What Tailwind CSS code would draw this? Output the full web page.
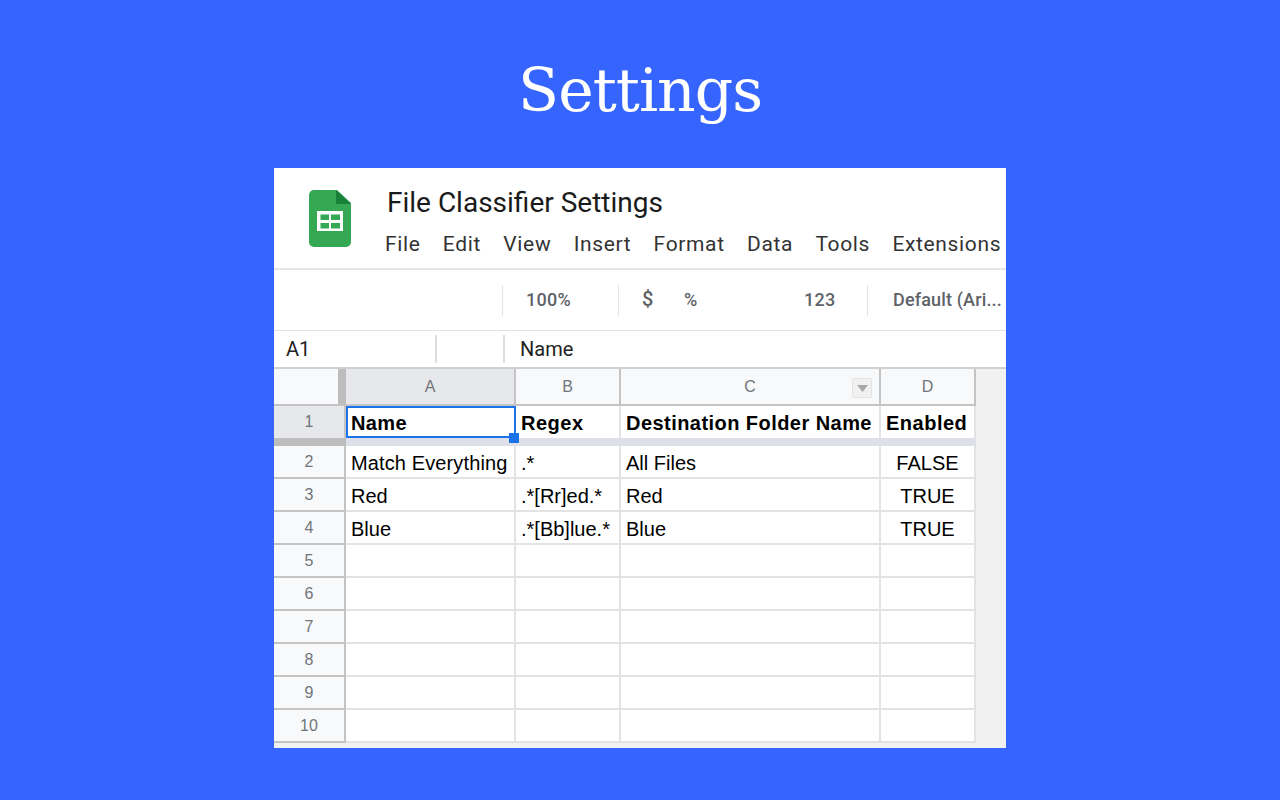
<!DOCTYPE html>
<html lang="en">
<head>
  <meta charset="utf-8" />
  <title>Settings</title>
  <script src="https://cdn.jsdelivr.net/npm/@tailwindcss/browser@4"></script>
</head>
<body class="h-[800px] overflow-hidden bg-[#3664ff] font-['Roboto',sans-serif]">
  <h1 class="h-[168px] pt-[46px] text-center font-['DejaVu_Serif',serif] text-[60px] leading-[88px] tracking-[-1px] text-white">Settings</h1>

  <div class="ml-[274px] flex h-[580px] w-[732px] flex-col overflow-hidden bg-white">
    <!-- Title and menu -->
    <div class="flex h-[102px] shrink-0 border-b-2 border-[#e6e6e6]">
      <svg class="ml-[35px] mt-[22px] h-[57px] w-[42px] shrink-0" viewBox="0 0 42 57">
        <path d="M5 0H28L42 13V52a5 5 0 0 1-5 5H5a5 5 0 0 1-5-5V5a5 5 0 0 1 5-5z" fill="#34a853"/>
        <path d="M27 0L42 14H27z" fill="#188038"/>
        <path d="M8 21H34V41H8z" fill="#fff"/>
        <path d="M11.500 24.500H20V30H11.500zM22 24.500H31V30H22zM11.500 33H20V38.500H11.500zM22 33H31V38.500H22z" fill="#34a853"/>
      </svg>
      <div class="ml-[33px] min-w-0">
        <div class="mt-[17px] h-[36px] whitespace-nowrap pl-[3px] text-[28px] leading-[36px] text-[#1a1a1a]">File Classifier Settings</div>
        <div class="ml-[1px] mt-[10px] flex gap-[22.300px] whitespace-nowrap text-[21px] leading-[26px] tracking-[0.65px] text-[#333]">
          <span>File</span><span>Edit</span><span>View</span><span>Insert</span><span>Format</span><span>Data</span><span>Tools</span><span>Extensions</span>
        </div>
      </div>
    </div>

    <!-- Toolbar -->
    <div class="flex h-[61px] shrink-0 items-center whitespace-nowrap border-b border-[#e3e3e3] text-[18px] font-medium tracking-[0.3px] text-[#5f6368]">
      <div class="ml-[228px] h-[31px] w-[1px] bg-[#e3e3e3]"></div>
      <span class="mb-[2px] ml-[23px] w-[92px]">100%</span>
      <div class="h-[31px] w-[1px] bg-[#e3e3e3]"></div>
      <span class="mb-[2px] ml-[23px] w-[42px] text-[20px]">$</span>
      <span class="mb-[2px] w-[120px]">%</span>
      <span class="mb-[2px] w-[63px]">123</span>
      <div class="h-[31px] w-[1px] bg-[#e3e3e3]"></div>
      <span class="mb-[2px] ml-[25px] tracking-[0.15px]">Default (Ari...</span>
    </div>

    <!-- Formula bar -->
    <div class="flex h-[38px] shrink-0 items-center border-b-2 border-[#d0d0d0] text-[20px] text-[#222]">
      <span class="ml-[12px] w-[149px]">A1</span>
      <div class="h-[28px] w-[2px] bg-[#dcdcdc]"></div>
      <div class="ml-[66px] h-[28px] w-[2px] bg-[#dcdcdc]"></div>
      <span class="ml-[15px]">Name</span>
    </div>

    <!-- Sheet -->
    <div class="flex-1 bg-[#f1f1f1]">
      <div class="grid w-[702px] grid-cols-[72px_170px_105px_260px_95px] grid-rows-[37px_32px_8px_33px_33px_33px_33px_33px_33px_33px_33px_33px] font-['Liberation_Sans',sans-serif] text-[20px] text-black">
        <!-- Column headers -->
        <div class="border-r-[8px] border-b-2 border-r-[#bdbdbd] border-b-[#c4c4c4] bg-[#f8f9fa]"></div>
        <div class="flex items-center justify-center border-r-2 border-b-2 border-[#c4c4c4] bg-[#e7e8ec] pt-[1px] text-[16px] text-[#70757a]">A</div>
        <div class="flex items-center justify-center border-r-2 border-b-2 border-[#c4c4c4] bg-[#f8f9fa] pt-[1px] text-[16px] text-[#70757a]">B</div>
        <div class="relative flex items-center justify-center border-r-2 border-b-2 border-[#c4c4c4] bg-[#f8f9fa] pt-[1px] text-[16px] text-[#70757a]">C
          <div class="absolute right-[7px] top-[9px] flex h-[20px] w-[20px] items-center justify-center rounded-[2px] border border-[#e3e3e3] bg-[#f1f1f1]">
            <svg class="h-[7px] w-[11px]" viewBox="0 0 11 7"><path d="M0 0H11L5.500 7z" fill="#a8a8a8"/></svg>
          </div>
        </div>
        <div class="flex items-center justify-center border-r-2 border-b-2 border-[#c4c4c4] bg-[#f8f9fa] pt-[1px] text-[16px] text-[#70757a]">D</div>

        <!-- Row 1 -->
        <div class="flex items-center justify-center border-r-2 border-[#c4c4c4] bg-[#e7e8ec] text-[16px] text-[#70757a]">1</div>
        <div class="relative flex items-center border-2 border-[#1a73e8] bg-white pl-[3px] pt-[2px] font-bold tracking-[0.4px]">Name
          <div class="absolute -bottom-[7px] -right-[5px] h-[10px] w-[10px] bg-[#1a73e8]"></div>
        </div>
        <div class="flex items-center border-r-2 border-[#e3e3e3] bg-white pl-[5px] pt-[2px] font-bold tracking-[0.5px]">Regex</div>
        <div class="flex items-center border-r-2 border-[#e3e3e3] bg-white pl-[5px] pt-[2px] font-bold tracking-[0.45px]">Destination Folder Name</div>
        <div class="flex items-center border-r-2 border-[#e3e3e3] bg-white pl-[5px] pt-[2px] font-bold tracking-[0.5px]">Enabled</div>

        <!-- Frozen row bar -->
        <div class="bg-[#bdbdbd]"></div>
        <div class="col-span-4 bg-[#dde0e9]"></div>

        <!-- Data rows -->
        <div class="flex items-center justify-center border-r-2 border-b-2 border-[#c4c4c4] bg-[#f8f9fa] text-[16px] text-[#70757a]">2</div>
        <div class="flex items-center border-r-2 border-b-2 border-[#e3e3e3] bg-white pl-[5px] pt-[2px] tracking-[0.12px]">Match Everything</div>
        <div class="flex items-center border-r-2 border-b-2 border-[#e3e3e3] bg-white pl-[5px] pt-[2px]">.*</div>
        <div class="flex items-center border-r-2 border-b-2 border-[#e3e3e3] bg-white pl-[5px] pt-[2px]">All Files</div>
        <div class="flex items-center justify-center border-r-2 border-b-2 border-[#e3e3e3] bg-white pt-[2px]">FALSE</div>

        <div class="flex items-center justify-center border-r-2 border-b-2 border-[#c4c4c4] bg-[#f8f9fa] text-[16px] text-[#70757a]">3</div>
        <div class="flex items-center border-r-2 border-b-2 border-[#e3e3e3] bg-white pl-[5px] pt-[2px]">Red</div>
        <div class="flex items-center border-r-2 border-b-2 border-[#e3e3e3] bg-white pl-[5px] pt-[2px]">.*[Rr]ed.*</div>
        <div class="flex items-center border-r-2 border-b-2 border-[#e3e3e3] bg-white pl-[5px] pt-[2px]">Red</div>
        <div class="flex items-center justify-center border-r-2 border-b-2 border-[#e3e3e3] bg-white pt-[2px]">TRUE</div>

        <div class="flex items-center justify-center border-r-2 border-b-2 border-[#c4c4c4] bg-[#f8f9fa] text-[16px] text-[#70757a]">4</div>
        <div class="flex items-center border-r-2 border-b-2 border-[#e3e3e3] bg-white pl-[5px] pt-[2px]">Blue</div>
        <div class="flex items-center border-r-2 border-b-2 border-[#e3e3e3] bg-white pl-[5px] pt-[2px]">.*[Bb]lue.*</div>
        <div class="flex items-center border-r-2 border-b-2 border-[#e3e3e3] bg-white pl-[5px] pt-[2px]">Blue</div>
        <div class="flex items-center justify-center border-r-2 border-b-2 border-[#e3e3e3] bg-white pt-[2px]">TRUE</div>

        <div class="flex items-center justify-center border-r-2 border-b-2 border-[#c4c4c4] bg-[#f8f9fa] text-[16px] text-[#70757a]">5</div>
        <div class="border-r-2 border-b-2 border-[#e3e3e3] bg-white"></div>
        <div class="border-r-2 border-b-2 border-[#e3e3e3] bg-white"></div>
        <div class="border-r-2 border-b-2 border-[#e3e3e3] bg-white"></div>
        <div class="border-r-2 border-b-2 border-[#e3e3e3] bg-white"></div>

        <div class="flex items-center justify-center border-r-2 border-b-2 border-[#c4c4c4] bg-[#f8f9fa] text-[16px] text-[#70757a]">6</div>
        <div class="border-r-2 border-b-2 border-[#e3e3e3] bg-white"></div>
        <div class="border-r-2 border-b-2 border-[#e3e3e3] bg-white"></div>
        <div class="border-r-2 border-b-2 border-[#e3e3e3] bg-white"></div>
        <div class="border-r-2 border-b-2 border-[#e3e3e3] bg-white"></div>

        <div class="flex items-center justify-center border-r-2 border-b-2 border-[#c4c4c4] bg-[#f8f9fa] text-[16px] text-[#70757a]">7</div>
        <div class="border-r-2 border-b-2 border-[#e3e3e3] bg-white"></div>
        <div class="border-r-2 border-b-2 border-[#e3e3e3] bg-white"></div>
        <div class="border-r-2 border-b-2 border-[#e3e3e3] bg-white"></div>
        <div class="border-r-2 border-b-2 border-[#e3e3e3] bg-white"></div>

        <div class="flex items-center justify-center border-r-2 border-b-2 border-[#c4c4c4] bg-[#f8f9fa] text-[16px] text-[#70757a]">8</div>
        <div class="border-r-2 border-b-2 border-[#e3e3e3] bg-white"></div>
        <div class="border-r-2 border-b-2 border-[#e3e3e3] bg-white"></div>
        <div class="border-r-2 border-b-2 border-[#e3e3e3] bg-white"></div>
        <div class="border-r-2 border-b-2 border-[#e3e3e3] bg-white"></div>

        <div class="flex items-center justify-center border-r-2 border-b-2 border-[#c4c4c4] bg-[#f8f9fa] text-[16px] text-[#70757a]">9</div>
        <div class="border-r-2 border-b-2 border-[#e3e3e3] bg-white"></div>
        <div class="border-r-2 border-b-2 border-[#e3e3e3] bg-white"></div>
        <div class="border-r-2 border-b-2 border-[#e3e3e3] bg-white"></div>
        <div class="border-r-2 border-b-2 border-[#e3e3e3] bg-white"></div>

        <div class="flex items-center justify-center border-r-2 border-b-2 border-[#c4c4c4] bg-[#f8f9fa] text-[16px] text-[#70757a]">10</div>
        <div class="border-r-2 border-b-2 border-[#e3e3e3] bg-white"></div>
        <div class="border-r-2 border-b-2 border-[#e3e3e3] bg-white"></div>
        <div class="border-r-2 border-b-2 border-[#e3e3e3] bg-white"></div>
        <div class="border-r-2 border-b-2 border-[#e3e3e3] bg-white"></div>
      </div>
    </div>
  </div>
</body>
</html>
